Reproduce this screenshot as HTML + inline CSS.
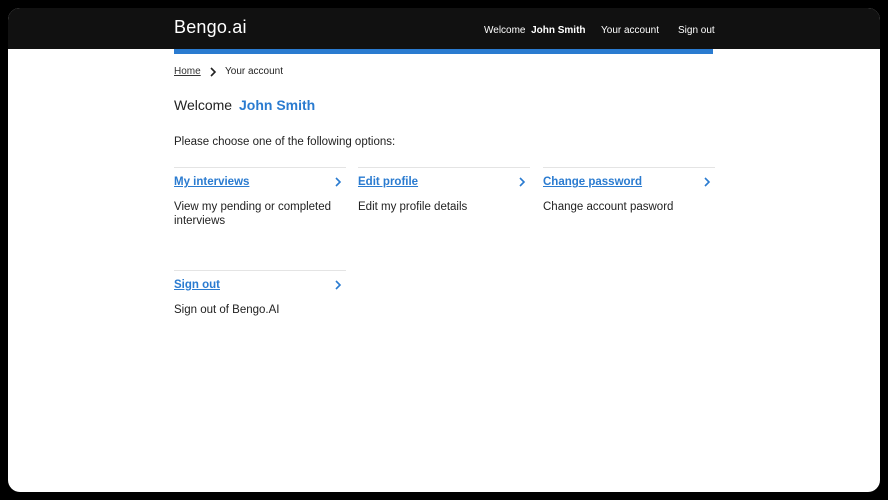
<!DOCTYPE html>
<html><head><meta charset="utf-8"><style>
*{margin:0;padding:0;box-sizing:border-box}
html,body{width:888px;height:500px;background:#000;overflow:hidden;font-family:"Liberation Sans",Arial,sans-serif}
.frame{position:absolute;left:8px;top:8px;width:872px;height:484px;background:#fff;border-radius:12px;overflow:hidden}
.hdr{position:absolute;left:0;top:0;width:872px;height:41px;background:#111}
.logo{position:absolute;left:166px;top:9px;color:#fff;font-size:18px;letter-spacing:0.2px}
.nav{position:absolute;top:17px;font-size:10px;color:#fff}
.bar{position:absolute;left:166px;top:41px;width:539px;height:5px;background:#2a7bd0}
.crumb{position:absolute;left:166px;top:58px;font-size:10px;color:#222}
.crumb u{color:#333}
.crumb svg{position:absolute;top:1px}
.h1{position:absolute;left:166px;top:89px;font-size:14px;color:#222}
.h1 b{color:#2a7bd0;font-weight:bold;margin-left:3px}
.p{position:absolute;left:166px;top:128px;font-size:11.5px;color:#222}
.card{position:absolute;width:172px;border-top:1px solid #e4e4e4}
.card a{position:absolute;left:0;top:8px;font-size:11.5px;font-weight:bold;color:#2a7bd0;text-decoration:underline}
.card svg{position:absolute;right:4px;top:9px}
.card p{position:absolute;left:0;top:32px;font-size:11.5px;color:#222;line-height:14px;width:172px}
</style></head><body>
<div class="frame">
<div class="hdr">
<div class="logo">Bengo.ai</div>
<div class="nav" style="left:476px">Welcome &nbsp;<b>John Smith</b></div>
<div class="nav" style="left:593px">Your account</div>
<div class="nav" style="left:670px">Sign out</div>
</div>
<div class="bar"></div>
<div class="crumb"><u>Home</u><svg style="left:35px" width="8" height="10" viewBox="0 0 8 10"><path d="M2 1l4 4-4 4" fill="none" stroke="#222" stroke-width="1.6"/></svg><span style="position:absolute;left:51px;white-space:nowrap">Your account</span></div>
<div class="h1">Welcome <b>John Smith</b></div>
<div class="p">Please choose one of the following options:</div>
<div class="card" style="left:166px;top:159px"><a>My interviews</a><svg width="8" height="10" viewBox="0 0 8 10"><path d="M2 1l4 4-4 4" fill="none" stroke="#2a7bd0" stroke-width="1.6"/></svg><p>View my pending or completed interviews</p></div>
<div class="card" style="left:350px;top:159px"><a>Edit profile</a><svg width="8" height="10" viewBox="0 0 8 10"><path d="M2 1l4 4-4 4" fill="none" stroke="#2a7bd0" stroke-width="1.6"/></svg><p>Edit my profile details</p></div>
<div class="card" style="left:535px;top:159px"><a>Change password</a><svg width="8" height="10" viewBox="0 0 8 10"><path d="M2 1l4 4-4 4" fill="none" stroke="#2a7bd0" stroke-width="1.6"/></svg><p>Change account pasword</p></div>
<div class="card" style="left:166px;top:262px"><a>Sign out</a><svg width="8" height="10" viewBox="0 0 8 10"><path d="M2 1l4 4-4 4" fill="none" stroke="#2a7bd0" stroke-width="1.6"/></svg><p>Sign out of Bengo.AI</p></div>
</div>
</body></html>
